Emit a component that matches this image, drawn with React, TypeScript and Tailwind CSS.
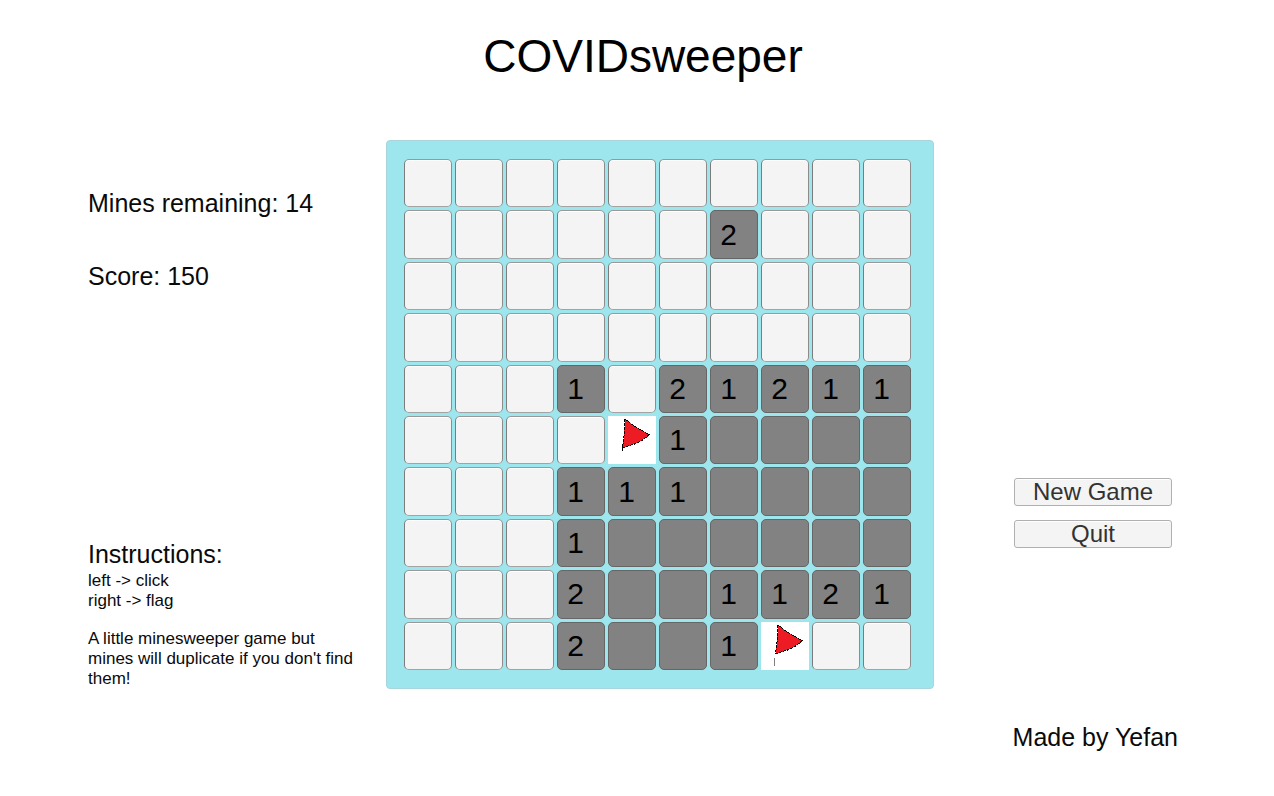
import React from "react";

// "#" is a covered cell, "." an empty open cell, "F" a flag, digits count nearby mines.
const ROWS = [
  "##########",
  "######2###",
  "##########",
  "##########",
  "###1#21211",
  "####F1....",
  "###111....",
  "###1......",
  "###2..1121",
  "###2..1F##",
];

const COVERED =
  "rounded-[5px] border border-t-[#999] border-r-[#8c8c8c] border-b-[#a3a3a3] border-l-[#7c7c7c] bg-[#f4f4f4] shadow-[inset_0_1px_0_#fff]";
const OPENED = "rounded-[5px] border border-[#666] bg-[#828282]";

function Flag({ pole }: { pole: boolean }) {
  return (
    <svg viewBox="0 0 48 48" preserveAspectRatio="none" className="block h-full w-full" shapeRendering="crispEdges" aria-hidden="true">
      <path
        d="M17 3 L27 10.5 L41 18.5 L36 23 L29 27 L14.5 31.5 L16 20 Z"
        fill="#ed1c24"
        stroke="#000"
        strokeWidth="1"
        strokeDasharray="3 1"
      />
      {pole ? (
        <path d="M13.5 36 V44" stroke="#7f7f7f" strokeWidth="1" />
      ) : (
        <path d="M14.5 30 V35" stroke="#000" strokeWidth="1" />
      )}
    </svg>
  );
}

function Cell({ value, row, column, pole }: { value: string; row: number; column: number; pole: boolean }) {
  const place = `Row ${row}, column ${column}`;
  if (value === "F") {
    return (
      <button type="button" aria-label={`${place}, flagged`} className="min-h-0 min-w-0 bg-white">
        <Flag pole={pole} />
      </button>
    );
  }
  if (value === "#") {
    return <button type="button" aria-label={`${place}, covered`} className={COVERED} />;
  }
  return (
    <button
      type="button"
      aria-label={`${place}, ${value === "." ? "empty" : value}`}
      className={`flex min-h-0 min-w-0 items-center justify-center pr-[11px] text-[30px] leading-none text-black ${OPENED}`}
    >
      {value === "." ? null : value}
    </button>
  );
}

function ActionButton({ children }: { children: React.ReactNode }) {
  return (
    <button
      type="button"
      className="flex h-7 w-full items-center justify-center rounded-[3px] border border-[#b0b0b0] bg-[#f4f4f4] text-2xl leading-none text-[#323232] shadow-[inset_0_1px_0_#fff]"
    >
      {children}
    </button>
  );
}

export default function App() {
  return (
    <div className="flex min-h-screen flex-col bg-white font-['Liberation_Sans',Arial,sans-serif] text-[#0a0a0a]">
      <header className="flex h-[140px] justify-center pt-8 pl-3">
        <h1 className="text-[46px] leading-[48px] text-black">COVIDsweeper</h1>
      </header>

      <main className="grid grid-cols-[386fr_548fr_340fr]">
        <section className="flex flex-col justify-between pt-[47px] pl-[88px] text-[25px] leading-8">
          <div className="flex flex-col gap-[41px]">
            <p>Mines remaining: 14</p>
            <p>Score: 150</p>
          </div>
          <div className="pr-6">
            <h2 className="pb-px">Instructions:</h2>
            <div className="text-[17px] leading-5">
              <p>left -&gt; click</p>
              <p>right -&gt; flag</p>
              <p className="mt-[18px]">A little minesweeper game but mines will duplicate if you don't find them!</p>
            </div>
          </div>
        </section>

        <section
          aria-label="Mine field"
          className="grid aspect-[548/549] grid-cols-10 grid-rows-10 gap-[3px] rounded border border-[#a9d6dc] bg-[#9de6ee] pt-[18px] pr-[22px] pb-[18px] pl-[17px]"
        >
          {ROWS.map((line, r) =>
            line.split("").map((value, c) => (
              <Cell key={`${r}-${c}`} value={value} row={r + 1} column={c + 1} pole={r === 9} />
            )),
          )}
        </section>

        <section className="flex flex-col justify-end gap-3.5 pr-[102px] pb-[141px] pl-20">
          <ActionButton>New Game</ActionButton>
          <ActionButton>Quit</ActionButton>
        </section>
      </main>

      <footer className="flex justify-end pt-8 pr-24 text-[25px] leading-8">
        <p>Made by Yefan</p>
      </footer>
    </div>
  );
}
